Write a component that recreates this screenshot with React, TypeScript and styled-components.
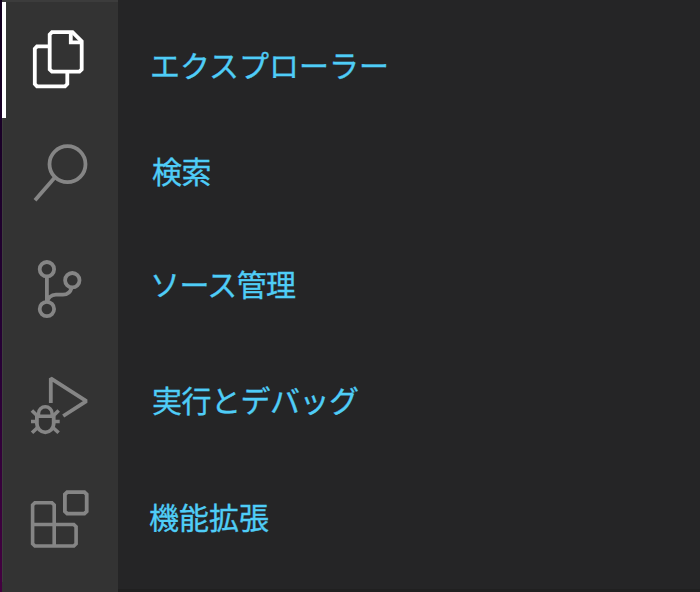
import React from "react";
import styled, { createGlobalStyle } from "styled-components";

const GlobalStyle = createGlobalStyle`
  body { margin: 0; background: #252526; overflow: hidden; }
  * { box-sizing: border-box; }
`;

const Workbench = styled.div`
  display: flex;
  width: 700px;
  height: 592px;
  background: #252526;
`;

const WindowEdge = styled.div`
  width: 2px;
  background: linear-gradient(#12001f, #260035 60%, #440040);
`;

const ActivityBar = styled.nav`
  display: flex;
  flex-direction: column;
  width: 116px;
  background: #333333;
  border-top: 2px solid #3c3c3c;
`;

const ActivityItem = styled.button<{ $active?: boolean }>`
  display: block;
  width: 116px;
  height: 116px;
  padding: 0;
  border: 0;
  background: ${(p) => (p.$active ? "linear-gradient(90deg, #fff 4px, transparent 4px)" : "linear-gradient(90deg, #3d3d3d 1px, transparent 1px)")};
  color: ${(p) => (p.$active ? "#ffffff" : "#858585")};
`;

const Icon = styled.svg`
  display: block;
  width: 116px;
  height: 116px;
  fill: none;
  stroke: currentColor;
  stroke-width: 3.8;
`;

const Labels = styled.main`
  display: flex;
  flex: 1;
  flex-direction: column;
  align-items: flex-start;
  border-bottom: 3px solid #202020;
`;

const Label = styled.div<{ $top: number; $left: number; $spacing?: number }>`
  margin-top: ${(p) => p.$top}px;
  margin-left: ${(p) => p.$left}px;
  font: 400 30px/40px "Noto Sans CJK JP", sans-serif;
  letter-spacing: ${(p) => p.$spacing ?? 0}px;
  color: #4fcdf7;
  -webkit-text-stroke: 0.35px #4fcdf7;
  white-space: nowrap;
`;

const FilesIcon = () => (
  <Icon viewBox="2 2 116 116">
    <path d="M52 32.2H72.5L81.7 41.4V69.4L79.4 71.7H52L49.7 69.4V34.5Z" />
    <path d="M70.8 32.5V42.4H81.5" />
    <path d="M49.5 46.4H37L34.8 48.7V84L37 86.3H65L67.3 84V72" />
  </Icon>
);

const SearchIcon = () => (
  <Icon viewBox="2 118 116 116">
    <circle cx="67.5" cy="164.2" r="18" />
    <path d="M54.8 177.5L35 200.3" />
  </Icon>
);

const SourceControlIcon = () => (
  <Icon viewBox="2 234 116 116">
    <circle cx="46.9" cy="269.2" r="7.2" />
    <circle cx="72.3" cy="280.2" r="7.2" />
    <circle cx="46.9" cy="309" r="7.2" />
    <path d="M46.9 276.5V302M71.7 287.5C70.5 292 67 294.7 63 294.7H56C51 294.7 47.5 298 47.5 302" />
  </Icon>
);

const DebugIcon = () => (
  <Icon viewBox="2 350 116 116">
    <path d="M50.8 403V378.3L86.4 401.2L63.2 416" strokeLinejoin="bevel" />
    <path d="M35.5 416.2H55M38.5 415.8V413.4A6.8 6.6 0 0 1 52.1 413.4V415.8" strokeWidth="3.5" />
    <path d="M36.9 416V423.7A8.4 8.6 0 0 0 53.7 423.7V416" />
    <path d="M31.9 410.4L37.3 415.8M58.7 410.4L53.3 415.8M31 421.5H36.5M53.7 421.5H59.7M32 432.8L38 427.2M58.6 432.8L52.6 427.2" strokeWidth="3.6" />
  </Icon>
);

const ExtensionsIcon = () => (
  <Icon viewBox="2 466 116 116">
    <path d="M54.2 524.5V505L51.9 502.7H34.9L32.6 505V543.7L34.9 546H73.8L76.1 543.7V526.8L73.8 524.5H32.6M54.2 524.5V546" strokeWidth="3.6" />
    <path d="M67.2 492.1H84.4L86.7 494.4V511.4L84.4 513.7H67.2L64.9 511.4V494.4Z" />
  </Icon>
);

export default function App() {
  return (
    <>
      <GlobalStyle />
      <Workbench>
        <WindowEdge />
        <ActivityBar>
          <ActivityItem $active aria-label="エクスプローラー"><FilesIcon /></ActivityItem>
          <ActivityItem aria-label="検索"><SearchIcon /></ActivityItem>
          <ActivityItem aria-label="ソース管理"><SourceControlIcon /></ActivityItem>
          <ActivityItem aria-label="実行とデバッグ"><DebugIcon /></ActivityItem>
          <ActivityItem aria-label="機能拡張"><ExtensionsIcon /></ActivityItem>
        </ActivityBar>
        <Labels>
          <Label $top={44} $left={32}>エクスプローラー</Label>
          <Label $top={66} $left={34} $spacing={-0.5}>検索</Label>
          <Label $top={73} $left={32} $spacing={-0.6}>ソース管理</Label>
          <Label $top={76} $left={34} $spacing={-0.5}>実行とデバッグ</Label>
          <Label $top={77} $left={31}>機能拡張</Label>
        </Labels>
      </Workbench>
    </>
  );
}
